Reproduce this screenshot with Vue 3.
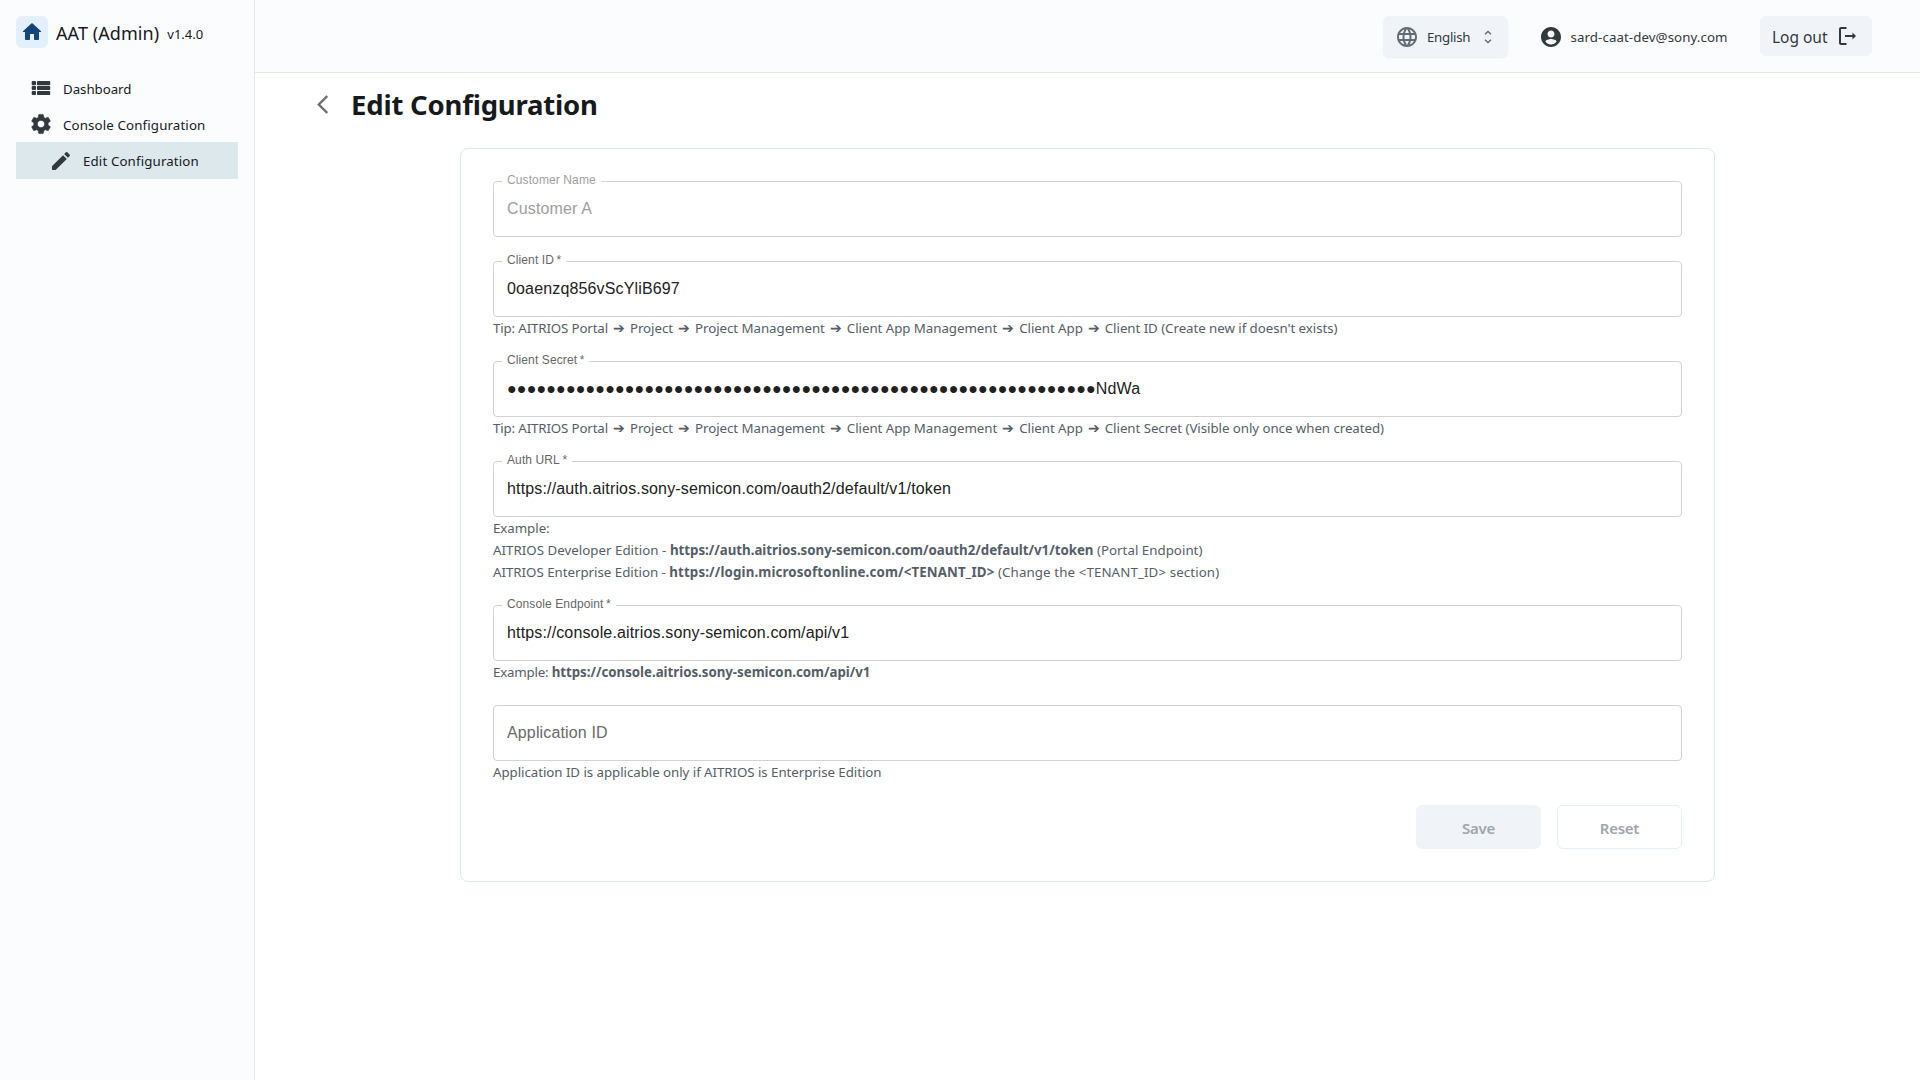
<script setup>
const tip = ['Project', 'Project Management', 'Client App Management', 'Client App']

const fields = [
  { label: 'Customer Name', value: 'Customer A', disabled: true, hints: [] },
  {
    label: 'Client ID', required: true, value: '0oaenzq856vScYliB697',
    path: [...tip, "Client ID (Create new if doesn't exists)"], hints: [],
  },
  {
    label: 'Client Secret', required: true, value: '●'.repeat(60) + 'NdWa',
    path: [...tip, 'Client Secret (Visible only once when created)'], hints: [],
  },
  {
    label: 'Auth URL', required: true, value: 'https://auth.aitrios.sony-semicon.com/oauth2/default/v1/token',
    hints: [
      { before: 'Example:' },
      { before: 'AITRIOS Developer Edition - ', strong: 'https://auth.aitrios.sony-semicon.com/oauth2/default/v1/token', after: ' (Portal Endpoint)', edition: true },
      { before: 'AITRIOS Enterprise Edition - ', strong: 'https://login.microsoftonline.com/<TENANT_ID>', after: ' (Change the <TENANT_ID> section)', wide: true },
    ],
  },
  {
    label: 'Console Endpoint', required: true, value: 'https://console.aitrios.sony-semicon.com/api/v1',
    hints: [{ before: 'Example: ', strong: 'https://console.aitrios.sony-semicon.com/api/v1', tight: true }],
  },
  {
    placeholder: 'Application ID',
    hints: [{ before: 'Application ID is applicable only if AITRIOS is Enterprise Edition' }],
  },
]
</script>

<template>
  <div class="app">
    <aside class="sidebar">
      <div class="brand">
        <span class="home">
          <svg width="24" height="24" viewBox="0 0 24 24" fill="currentColor"><path d="M10 19v-5h4v5c0 .55.45 1 1 1h3c.55 0 1-.45 1-1v-7h1.700c.46 0 .68-.57.33-.87L12.670 3.600c-.38-.34-.96-.34-1.340 0l-8.360 7.530c-.34.3-.13.87.33.87H5v7c0 .55.45 1 1 1h3c.55 0 1-.45 1-1z" /></svg>
        </span>
        <span class="name">AAT (Admin)</span>
        <span class="version">v1.4.0</span>
      </div>
      <nav>
        <a class="item dash">
          <svg width="24" height="24" viewBox="0 0 24 24" fill="currentColor">
            <rect x="2.700" y="5" width="4.300" height="4.200" rx="1" /><rect x="8" y="5" width="13.200" height="4.200" rx=".8" />
            <rect x="2.700" y="10" width="4.300" height="4" rx="1" /><rect x="8" y="10" width="13.200" height="4" rx=".8" />
            <rect x="2.700" y="14.900" width="4.300" height="4.200" rx="1" /><rect x="8" y="14.900" width="13.200" height="4.200" rx=".8" />
          </svg>
          <span>Dashboard</span>
        </a>
        <a class="item">
          <svg width="24" height="24" viewBox="0 0 24 24" fill="currentColor"><path d="M19.140 12.940c.04-.3.06-.61.06-.94 0-.32-.02-.64-.07-.94l2.030-1.580c.18-.14.23-.41.12-.61l-1.920-3.320c-.12-.22-.37-.29-.59-.22l-2.390.96c-.5-.38-1.030-.7-1.620-.94l-.36-2.540c-.04-.24-.24-.41-.48-.41h-3.840c-.24 0-.43.17-.47.41l-.36 2.540c-.59.24-1.130.57-1.620.94l-2.390-.96c-.22-.08-.47 0-.59.22L2.740 8.870c-.12.21-.08.47.12.61l2.030 1.580c-.05.3-.09.63-.09.94s.02.64.07.94l-2.030 1.580c-.18.14-.23.41-.12.61l1.920 3.320c.12.22.37.29.59.22l2.390-.96c.5.38 1.030.7 1.620.94l.36 2.540c.05.24.24.41.48.41h3.840c.24 0 .44-.17.47-.41l.36-2.540c.59-.24 1.130-.56 1.620-.94l2.390.96c.22.08.47 0 .59-.22l1.920-3.320c.12-.22.07-.47-.12-.61l-2.010-1.580zM12 15.600c-1.980 0-3.600-1.620-3.600-3.600s1.620-3.600 3.600-3.600 3.600 1.620 3.600 3.600-1.620 3.600-3.600 3.600z" stroke="currentColor" stroke-width=".5" stroke-linejoin="round" /></svg>
          <span>Console Configuration</span>
        </a>
        <a class="item active">
          <svg width="24" height="24" viewBox="0 0 24 24" fill="currentColor"><path d="M3 17.460v3.040c0 .28.22.5.5.5h3.040c.13 0 .26-.05.35-.15L17.810 9.940l-3.750-3.750L3.150 17.100c-.1.1-.15.22-.15.36zM20.710 7.040a.996.996 0 0 0 0-1.410l-2.340-2.340a.996.996 0 0 0-1.410 0l-1.830 1.830 3.750 3.750 1.830-1.830z" /></svg>
          <span>Edit Configuration</span>
        </a>
      </nav>
    </aside>

    <div class="page">
      <header>
        <div class="language">
          <svg class="globe" width="24" height="24" viewBox="0 0 24 24" fill="currentColor"><path d="M11.990 2C6.470 2 2 6.480 2 12s4.470 10 9.990 10C17.520 22 22 17.520 22 12S17.520 2 11.990 2zm6.930 6h-2.950c-.32-1.250-.78-2.450-1.380-3.560 1.840.63 3.370 1.910 4.330 3.560zM12 4.040c.83 1.200 1.480 2.530 1.910 3.960h-3.820c.43-1.430 1.080-2.760 1.910-3.960zM4.260 14C4.100 13.360 4 12.690 4 12s.1-1.360.26-2h3.380c-.08.66-.14 1.320-.14 2s.06 1.340.14 2H4.260zm.82 2h2.950c.32 1.250.78 2.450 1.380 3.560-1.840-.63-3.370-1.900-4.330-3.560zm2.950-8H5.080c.96-1.660 2.490-2.930 4.330-3.560C8.810 5.550 8.350 6.750 8.030 8zM12 19.960c-.83-1.200-1.480-2.530-1.910-3.960h3.820c-.43 1.430-1.080 2.760-1.910 3.960zM14.340 14H9.660c-.09-.66-.16-1.320-.16-2s.07-1.350.16-2h4.680c.09.65.16 1.320.16 2s-.07 1.340-.16 2zm.25 5.560c.6-1.110 1.060-2.310 1.380-3.560h2.950c-.96 1.650-2.490 2.930-4.330 3.560zM16.360 14c.08-.66.14-1.320.14-2s-.06-1.340-.14-2h3.380c.16.64.26 1.310.26 2s-.1 1.360-.26 2h-3.380z" /></svg>
          <span class="lang-name">English</span>
          <svg class="unfold" width="8" height="14" viewBox="0 0 8 14" fill="none" stroke="currentColor" stroke-width="1.400"><path d="M1 4.200 4 1.400 7 4.200M1 9.800l3 2.800 3-2.800" /></svg>
        </div>
        <div class="account">
          <svg width="24" height="24" viewBox="0 0 24 24" fill="currentColor"><path d="M12 2C6.480 2 2 6.480 2 12s4.480 10 10 10 10-4.480 10-10S17.520 2 12 2zm0 3.500c1.930 0 3.500 1.570 3.500 3.500s-1.570 3.500-3.500 3.500S8.500 10.930 8.500 9s1.570-3.500 3.500-3.500zm0 14c-2.330 0-4.320-1.200-5.600-3 .03-1.500 3.800-2.600 5.600-2.600s5.570 1.100 5.600 2.600c-1.280 1.800-3.270 3-5.600 3z" /></svg>
          <span>sard-caat-dev@sony.com</span>
        </div>
        <button class="logout">
          <span>Log out</span>
          <svg width="20" height="20" viewBox="0 0 20 20" fill="none" stroke="currentColor" stroke-width="2"><path d="M10.500 2H5Q4 2 4 3v14q0 1 1 1h5.500" stroke-width="2" /><path d="M9 10h9" stroke-width="2" /><path d="M16.500 6.600 20 10l-3.500 3.400z" fill="currentColor" stroke="none" /></svg>
        </button>
      </header>

      <main>
        <div class="title">
          <svg width="12" height="20" viewBox="0 0 12 20" fill="none" stroke="currentColor" stroke-width="2.400"><path d="M11.200 1 2.800 9.500l8.400 8.500" /></svg>
          <h1>Edit Configuration</h1>
        </div>

        <form class="card" @submit.prevent>
          <div v-for="(f, i) in fields" :key="i" class="field" :class="{ disabled: f.disabled }">
            <div class="input">
              <label v-if="f.label">{{ f.label }}<template v-if="f.required">&thinsp;*</template></label>
              <span class="value" :class="{ placeholder: f.placeholder }">{{ f.value || f.placeholder }}</span>
            </div>
            <p v-if="f.path" class="hint">
              <span class="tip">Tip: AITRIOS Portal</span><template v-for="step in f.path" :key="step"><i>➔</i><span>{{ step }}</span></template>
            </p>
            <p v-for="(h, k) in f.hints" :key="k" class="hint" :class="{ wide: h.wide, edition: h.edition, tight: h.tight }"><span>{{ h.before }}</span><b v-if="h.strong">{{ h.strong }}</b><em v-if="h.after">{{ h.after }}</em></p>
          </div>
          <div class="actions">
            <button class="save" disabled>Save</button>
            <button class="reset" disabled>Reset</button>
          </div>
        </form>
      </main>
    </div>
  </div>
</template>

<style>
body { background: #fff; }
</style>

<style scoped>
* { box-sizing: border-box; }
.app {
  display: flex;
  height: 1080px;
  overflow: hidden;
  font-family: "Noto Sans", "Open Sans", sans-serif;
  font-size: 13.3px;
  color: #171a1f;
}
svg { display: block; flex: none; }
button { font-family: inherit; border: 0; padding: 0; }

.sidebar {
  width: 255px;
  flex: none;
  padding: 16px 16px 0;
  background: #fbfcfe;
  border-right: 1px solid #e5e9ee;
}
.brand { display: flex; height: 32px; align-items: center; }
.home {
  display: grid;
  place-items: center;
  width: 32px;
  height: 32px;
  border-radius: 6px;
  background: #e3effb;
  color: #12467b;
}
.name { font-size: 18px; margin-left: 8px; padding-top: 1px; letter-spacing: 0.080px; }
.version { font-size: 13px; margin: 3px 0 0 8px; }
nav { margin-top: 22px; display: flex; flex-direction: column; }
.item {
  display: flex;
  align-items: center;
  height: 36px;
  padding-left: 13px;
  gap: 10px;
  letter-spacing: 0.130px;
  color: #171a1f;
}
.item span { padding-top: 1.500px; }
.item svg { color: #32383e; }
.dash { letter-spacing: -0.050px; }
.active { width: 222px; height: 37px; padding-left: 33px; background: #dde8ed; }

.page { flex: 1; min-width: 0; }
header {
  display: flex;
  justify-content: flex-end;
  height: 73px;
  padding: 16px 48px 0 0;
  background: #fbfcfe;
  border-bottom: 1px solid #e5e9ee;
  color: #32383e;
}
.language {
  display: flex;
  align-items: center;
  width: 125px;
  height: 41px;
  padding-left: 12px;
  border-radius: 6px;
  background: #f0f4f8;
  box-shadow: 0 1px 2px rgba(21, 21, 21, 0.06);
}
.globe { color: #636b74; }
.lang-name { width: 44px; margin-left: 8px; letter-spacing: -0.280px; }
.unfold { margin-left: 13px; color: #636b74; }
.account { display: flex; align-items: center; height: 41px; margin: 0 32.500px 0 31px; gap: 7.500px; letter-spacing: 0.080px; }
.account span { width: 157px; white-space: nowrap; }
.logout {
  display: flex;
  align-items: center;
  width: 112px;
  height: 40px;
  padding-left: 12px;
  border-radius: 6px;
  background: #f0f4f8;
  color: #32383e;
  font-size: 15.500px;
  letter-spacing: -0.020px;
}
.logout span { width: 64px; padding-top: 1px; text-align: left; white-space: nowrap; }
.logout svg { margin-top: -1px; }

.title { display: flex; align-items: center; height: 75px; padding: 0 0 11px 61px; color: #6f6f6f; }
h1 { margin: 0 0 0 23px; font-size: 27.500px; line-height: 38px; font-weight: 700; letter-spacing: -0.200px; color: #171a1c; }
.card {
  width: 1255px;
  height: 734px;
  margin-left: 205px;
  padding: 32px 32px 0;
  border: 1px solid #dde7ee;
  border-radius: 8px;
}
.field { margin-bottom: 22px; }
.field.disabled { margin-bottom: 24px; }
.input {
  position: relative;
  height: 56px;
  padding: 0 13px;
  border: 1px solid #d2d2d2;
  border-radius: 4px;
  display: flex;
  align-items: center;
  font-family: "Liberation Sans", Arial, sans-serif;
  font-size: 16px;
  letter-spacing: 0.150px;
  color: #212121;
}
label {
  position: absolute;
  left: 8px;
  top: -10px;
  padding: 0 5px;
  background: #fff;
  font-size: 12px;
  line-height: 16px;
  letter-spacing: 0.110px;
  color: #666;
}
.placeholder { color: #6a6a6a; }
.disabled label, .disabled .value { color: #9e9e9e; }
.hint { margin: 0; height: 22px; line-height: 22px; letter-spacing: -0.050px; color: #555e68; white-space: pre; }
.hint i { display: inline-block; width: 22px; text-align: center; font-style: normal; font-size: 14px; letter-spacing: 0; }
.hint em { font-style: normal; }
.hint b { letter-spacing: -0.030px; }
.hint .tip { letter-spacing: -0.140px; }
.edition { letter-spacing: 0.020px; }
.edition b { letter-spacing: -0.020px; }
.wide { letter-spacing: -0.020px; }
.wide b { letter-spacing: 0.140px; }
.wide em { letter-spacing: 0.110px; }
.tight { letter-spacing: -0.200px; }
.actions { display: flex; justify-content: flex-end; gap: 16px; }
.actions button {
  width: 125px;
  height: 44px;
  padding-top: 1px;
  border-radius: 6px;
  font-size: 15px;
  font-weight: 600;
  letter-spacing: -0.250px;
  color: #9fa6ad;
}
.save { background: #f0f4f8; }
.actions .reset { background: #fff; border: 1px solid #e7eef4; }
</style>
